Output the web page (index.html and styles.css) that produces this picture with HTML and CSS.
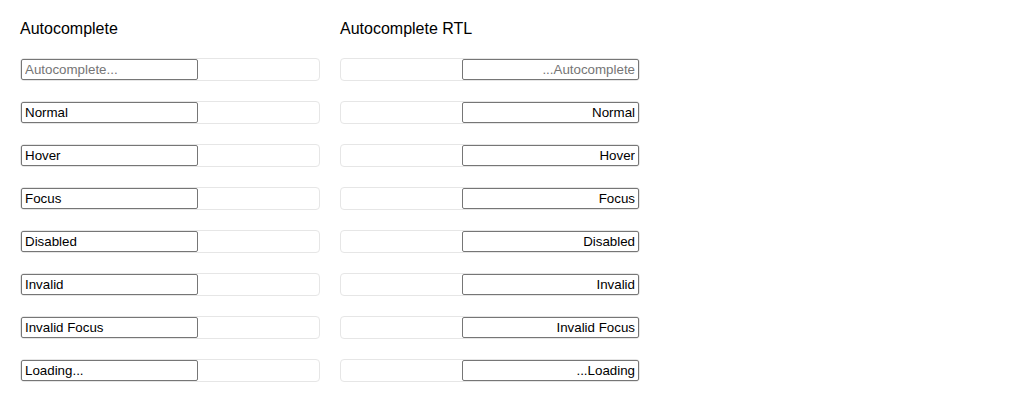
FILE: index.html
```html
<!DOCTYPE html>
<html>
<head>
<meta charset="utf-8">
<link rel="stylesheet" href="styles.css">
</head>
<body>
<div class="page">
  <div class="col">
    <div class="title">Autocomplete</div>
    <div class="field"><input class="inp" placeholder="Autocomplete..."></div>
    <div class="field"><input class="inp" value="Normal"></div>
    <div class="field"><input class="inp" value="Hover"></div>
    <div class="field"><input class="inp" value="Focus"></div>
    <div class="field"><input class="inp" value="Disabled"></div>
    <div class="field"><input class="inp" value="Invalid"></div>
    <div class="field"><input class="inp" value="Invalid Focus"></div>
    <div class="field"><input class="inp" value="Loading..."></div>
  </div>
  <div class="col">
    <div class="title">Autocomplete RTL</div>
    <div class="field rtl" dir="rtl"><input class="inp" dir="rtl" placeholder="Autocomplete..."></div>
    <div class="field rtl" dir="rtl"><input class="inp" dir="rtl" value="Normal"></div>
    <div class="field rtl" dir="rtl"><input class="inp" dir="rtl" value="Hover"></div>
    <div class="field rtl" dir="rtl"><input class="inp" dir="rtl" value="Focus"></div>
    <div class="field rtl" dir="rtl"><input class="inp" dir="rtl" value="Disabled"></div>
    <div class="field rtl" dir="rtl"><input class="inp" dir="rtl" value="Invalid"></div>
    <div class="field rtl" dir="rtl"><input class="inp" dir="rtl" value="Invalid Focus"></div>
    <div class="field rtl" dir="rtl"><input class="inp" dir="rtl" value="Loading..."></div>
  </div>
</div>
</body>
</html>
```

FILE: styles.css
```css
html, body {
  margin: 0;
  padding: 0;
  background: #fff;
}
.page {
  display: flex;
  gap: 20px;
  padding: 20px;
  font-family: "Liberation Sans", Arial, sans-serif;
  color: #000;
}
.col {
  width: 300px;
  display: flex;
  flex-direction: column;
  gap: 20px;
}
.title {
  font-size: 16px;
  line-height: 18px;
}
.field {
  display: flex;
  border: 1px solid #e6e6e6;
  border-radius: 4px;
  height: 21px;
}
.inp {
  box-sizing: border-box;
  width: 177px;
  height: 21px;
  margin: 0;
  border: 1px solid #767676;
  border-radius: 2px;
  padding: 1px 3px;
  font-family: "Liberation Sans", Arial, sans-serif;
  font-size: 13.333px;
  color: #000;
  background: #fff;
  outline: none;
}
.inp::placeholder {
  color: #757575;
}
```
